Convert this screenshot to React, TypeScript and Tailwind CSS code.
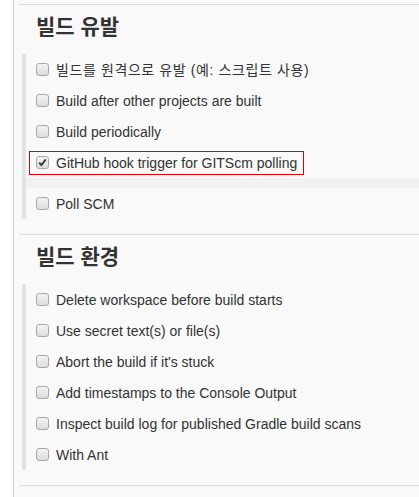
import React from 'react';

type Item = { label: string; checked?: boolean; focused?: boolean; gapAfter?: boolean; wide?: boolean };

const triggers: Item[] = [
  { label: '빌드를 원격으로 유발 (예: 스크립트 사용)', wide: true },
  { label: 'Build after other projects are built' },
  { label: 'Build periodically' },
  { label: 'GitHub hook trigger for GITScm polling', checked: true, focused: true, gapAfter: true },
  { label: 'Poll SCM' },
];

const environment: Item[] = [
  { label: 'Delete workspace before build starts' },
  { label: 'Use secret text(s) or file(s)' },
  { label: "Abort the build if it's stuck" },
  { label: 'Add timestamps to the Console Output' },
  { label: 'Inspect build log for published Gradle build scans' },
  { label: 'With Ant' },
];

const CheckBox = ({ checked }: { checked?: boolean }) => (
  <span className="flex h-[13px] w-[13px] shrink-0 items-center justify-center rounded-[3px] border border-[#a8a8a8] bg-gradient-to-b from-[#f4f4f4] to-[#dcdcdc]">
    {checked && (
      <svg width="9" height="9" viewBox="0 0 9 9">
        <path d="M1.2 4.6 L3.4 7 L7.8 1.4" fill="none" stroke="#333" strokeWidth="1.8" />
      </svg>
    )}
  </span>
);

const Row = ({ item }: { item: Item }) => (
  <>
    <div className="flex h-[31px] items-center pl-[3px]">
      <div
        className={
          item.focused
            ? 'flex h-[24px] items-center gap-[7px] border border-[#e00000] pl-[6px] pr-[6px]'
            : 'flex items-center gap-[7px] pl-[7px]'
        }
      >
        <CheckBox checked={item.checked} />
        <span className={item.wide ? 'text-[14px] leading-none tracking-[0.6px] text-[#333]' : 'text-[14px] leading-none text-[#333]'}>
          {item.label}
        </span>
      </div>
    </div>
    {item.gapAfter && <div className="h-[10px] bg-[#f2f2f2]" />}
  </>
);

const Section = ({ title, items }: { title: string; items: Item[] }) => (
  <section className="ml-[5px] mb-[15px] border-t border-[#dcdcdc]">
    <h2 className="flex h-[49px] items-center pl-[17px] pb-[6px] text-[21px] font-bold text-[#333]">{title}</h2>
    <div className="ml-[3px] border-l-[4px] border-[#e3e3e3]">
      {items.map((item, i) => (
        <Row key={i} item={item} />
      ))}
    </div>
  </section>
);

export default function App() {
  return (
    <div className="flex min-h-[497px] bg-white font-['Liberation_Sans','Noto_Sans_CJK_KR',sans-serif]">
      <div className="w-[13px] shrink-0" />
      <div className="flex-1 border-l border-[#d0d0d0] bg-[#f9f9f9] pt-[4px]">
        <Section title="빌드 유발" items={triggers} />
        <Section title="빌드 환경" items={environment} />
        <div className="ml-[5px] border-t border-[#dcdcdc]" />
      </div>
    </div>
  );
}
